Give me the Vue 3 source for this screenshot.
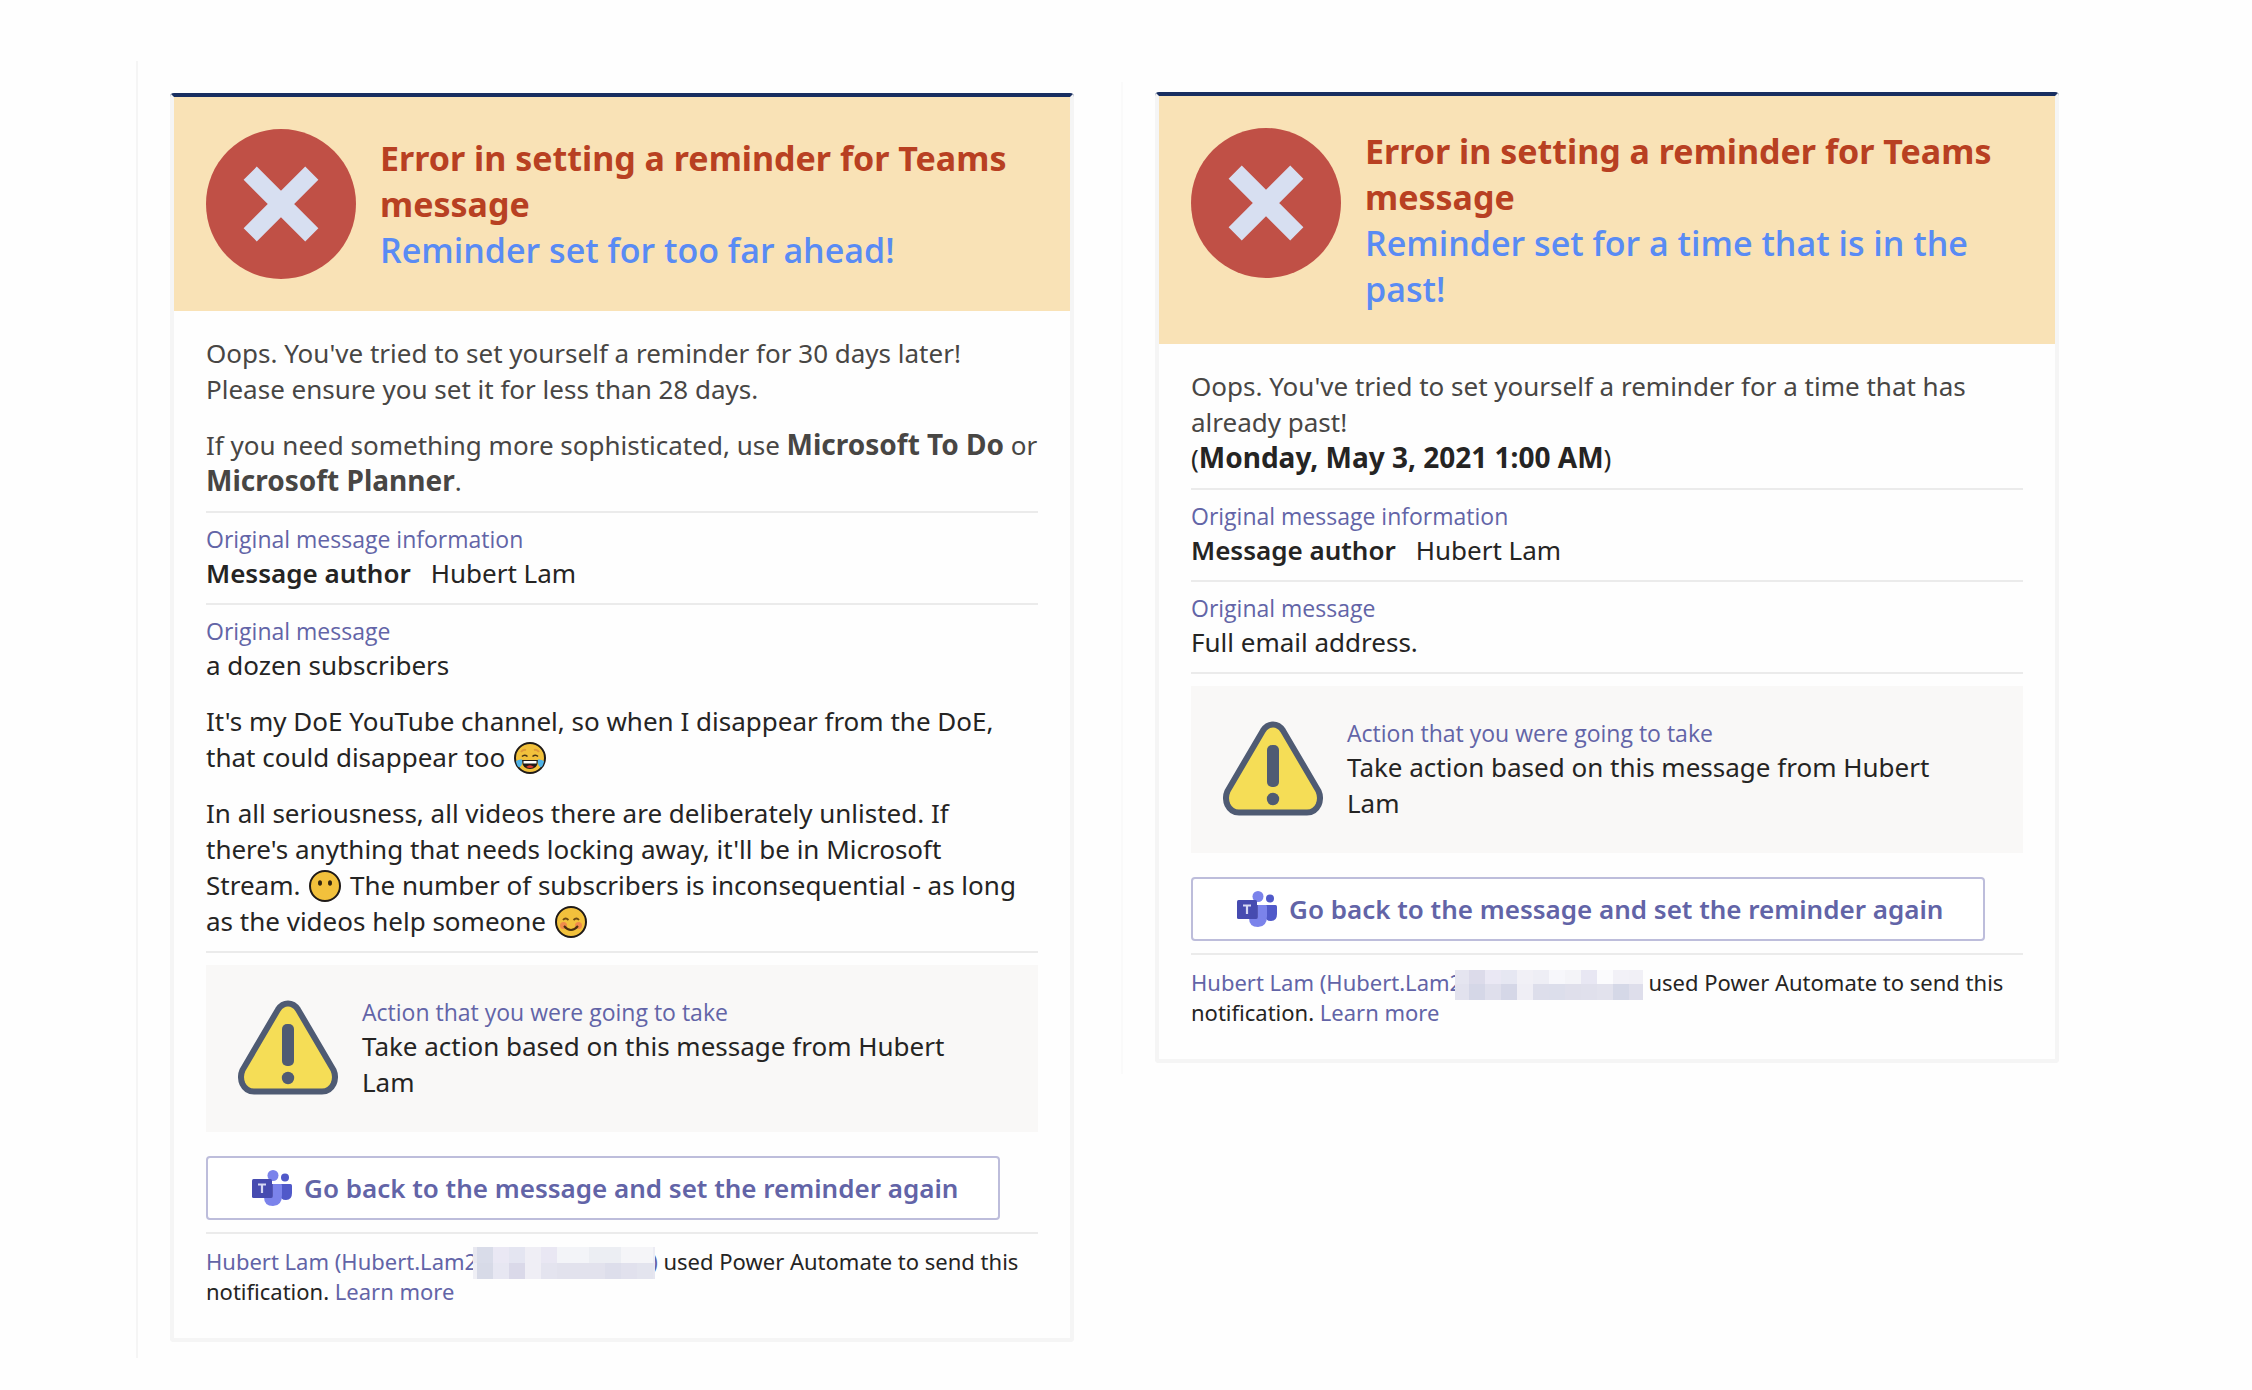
<script setup>
const cards = [
  {
    id: 'future',
    subtitle: 'Reminder set for too far ahead!',
    late: false,
    shades: {
      widths: [4, 16, 16, 16, 16, 16, 16, 16, 16, 16, 16, 16, 2],
      heights: [16, 16],
      rows: [
        ['#e8e8f0', '#d9dce9', '#eae8f4', '#e4e5f1', '#efeef5', '#e9e7f3', '#f3f4f8', '#f3f4f8', '#eceef3', '#eceef3', '#f5f5f8', '#f5f5f8', '#ececf4'],
        ['#efeff5', '#d7dae7', '#e7e7f2', '#dad9e9', '#efeef5', '#e4e4ef', '#e2e2ed', '#e2e2ed', '#e2e2ed', '#dddeeb', '#e1e1ed', '#e3e4ee', '#e6e6f0']
      ]
    }
  },
  {
    id: 'past',
    subtitle: 'Reminder set for a time that is in the past!',
    late: true,
    shades: {
      widths: [14, 16, 16, 16, 16, 16, 16, 16, 16, 16, 16, 14],
      heights: [14, 16],
      rows: [
        ['#e5e5f0', '#dcdbea', '#eae8f4', '#e6e7f2', '#f1f0f6', '#eeeef5', '#f7f7fb', '#f4f4f8', '#e8e7f3', '#fbfbfd', '#f2f1f7', '#f1f0f6'],
        ['#e2e2ee', '#d5d7e7', '#dfdfec', '#d5d7e7', '#efeef5', '#dddeeb', '#dcdeeb', '#dfdfeb', '#e0e0ec', '#e2e2ed', '#d5d8e7', '#dedeeb']
      ]
    }
  }
]

const sum = (list) => list.reduce((a, b) => a + b, 0)

function tiles({ widths, heights, rows }) {
  return rows.flatMap((row, r) =>
    row.map((fill, c) => ({
      fill,
      x: sum(widths.slice(0, c)),
      y: sum(heights.slice(0, r)),
      width: widths[c],
      height: heights[r]
    }))
  )
}
</script>

<template>
  <main class="page">
    <section v-for="card in cards" :key="card.id" class="thread" :class="card.id">
      <article class="card">
        <header class="banner">
          <svg class="error-icon" viewBox="0 0 150 150" aria-hidden="true">
            <circle cx="75" cy="75" r="75" fill="#c05046" />
            <path d="M44.2 44.2L105.8 105.8M105.8 44.2L44.2 105.8" stroke="#d7dff1" stroke-width="18.6" />
          </svg>
          <div class="banner-text">
            <h1>Error in setting a reminder for Teams message</h1>
            <h2>{{ card.subtitle }}</h2>
          </div>
        </header>

        <div class="body">
          <div v-if="card.late" class="intro">
            <p>
              Oops. You've tried to set yourself a reminder for a time that has<br />already past!<br />
              <span class="dark">(<strong>Monday, May 3, 2021 1:00 AM</strong>)</span>
            </p>
          </div>
          <div v-else class="intro">
            <p>
              Oops. You've tried to set yourself a reminder for 30 days later!<br />Please ensure you set it for
              less than 28 days.
            </p>
            <p>
              If you need something more sophisticated, use <strong>Microsoft To Do</strong> or
              <strong>Microsoft Planner</strong>.
            </p>
          </div>

          <section class="block">
            <h3>Original message information</h3>
            <dl class="fact">
              <dt>Message author</dt>
              <dd>Hubert Lam</dd>
            </dl>
          </section>

          <section class="block">
            <h3>Original message</h3>
            <p v-if="card.late">Full email address.</p>
            <template v-else>
              <p>a dozen subscribers</p>
              <p>
                It's my DoE YouTube channel, so when I disappear from the DoE,<br />that could disappear too
                <svg class="emoji" viewBox="0 0 32 32" role="img" aria-label="face with tears of joy">
                  <circle cx="16" cy="16" r="15" fill="#f2c13c" stroke="#1f1a17" stroke-width="2" />
                  <path d="M7 10Q9 7 12 8M20 8Q23 7 25 10" fill="none" stroke="#e09a3a" stroke-width="2" />
                  <path d="M8 14.500Q10.500 12 13.500 14.500M18.500 14.500Q21.500 12 24 14.500" fill="none" stroke="#4a3516" stroke-width="1.600" />
                  <path d="M8 18H24Q24 27 16 27Q8 27 8 18Z" fill="#1f1a17" />
                  <path d="M9.500 19H22.500V21.500H9.500Z" fill="#fff" />
                  <path d="M12 25Q16 21.500 20 25Q16 27 12 25Z" fill="#e03a2f" />
                  <path d="M2 19Q5 17 8 17.500Q9 23 6 25Q3 26 2 19ZM30 19Q27 17 24 17.500Q23 23 26 25Q29 26 30 19Z" fill="#4fb3e8" />
                </svg>
              </p>
              <p>
                In all seriousness, all videos there are deliberately unlisted. If<br />there's anything that needs
                locking away, it'll be in Microsoft<br />Stream.
                <svg class="emoji" viewBox="0 0 32 32" role="img" aria-label="face without mouth">
                  <circle cx="16" cy="16" r="15" fill="#f2c13c" stroke="#1f1a17" stroke-width="2" />
                  <ellipse cx="11" cy="13" rx="2" ry="2.800" fill="#33260f" />
                  <ellipse cx="21" cy="13" rx="2" ry="2.800" fill="#33260f" />
                </svg>
                The number of subscribers is inconsequential - as long<br />as the videos help someone
                <svg class="emoji" viewBox="0 0 32 32" role="img" aria-label="smiling face with smiling eyes">
                  <circle cx="16" cy="16" r="15" fill="#f2c13c" stroke="#1f1a17" stroke-width="2" />
                  <circle cx="8.500" cy="19.500" r="3.500" fill="#f08a4b" />
                  <circle cx="23.500" cy="19.500" r="3.500" fill="#f08a4b" />
                  <path d="M8 14Q10.500 11 13.500 14M18.500 14Q21.500 11 24 14" fill="none" stroke="#6b4a14" stroke-width="1.800" />
                  <path d="M9 20Q16 28 23 20" fill="none" stroke="#4a2f10" stroke-width="2" />
                </svg>
              </p>
            </template>
          </section>

          <section class="block flush">
            <div class="action">
              <svg class="warning-icon" viewBox="0 -2 100 100" aria-hidden="true">
                <path
                  d="M40 11.500Q44 5.500 50 5.500Q56 5.500 60 11.500L95.500 72Q98.500 79 95.500 86Q92 93.500 84 93.500H16Q8 93.500 4.500 86Q1.500 79 4.500 72Z"
                  fill="#f5dd56"
                  stroke="#4f5b73"
                  stroke-width="6"
                />
                <rect x="44" y="26" width="12" height="42" rx="5" fill="#4f5b73" />
                <circle cx="50" cy="80" r="6.200" fill="#4f5b73" />
              </svg>
              <div class="action-text">
                <h3>Action that you were going to take</h3>
                <p>Take action based on this message from Hubert Lam</p>
              </div>
            </div>
            <button type="button" class="go-back">
              <svg class="teams-icon" viewBox="0 0 40 36" aria-hidden="true">
                <circle cx="33" cy="7.500" r="4" fill="#5059c9" />
                <path d="M28 14H38.500Q40 14 40 15.500V23Q40 30 34 30Q28 30 28 24Z" fill="#5059c9" />
                <circle cx="21" cy="5.500" r="5.500" fill="#7b83eb" />
                <path d="M12 14H29Q30 14 30 15.500V25Q30 36 21 36Q12 36 12 27Z" fill="#7b83eb" />
                <path d="M12 14H21V26Q21 28 19 28H12.500Z" fill="#5558b5" />
                <rect x="0" y="9" width="20" height="19" rx="1.500" fill="#464bb0" />
                <path d="M6 14.500H14M10 14.500V23" stroke="#d5d7f2" stroke-width="2.200" />
              </svg>
              <span>Go back to the message and set the reminder again</span>
            </button>
          </section>

          <footer class="block small">
            <a href="#"
              >Hubert Lam (Hubert.Lam2<svg
                class="redacted"
                :width="sum(card.shades.widths)"
                :height="sum(card.shades.heights)"
                shape-rendering="crispEdges"
                aria-hidden="true"
              >
                <rect
                  v-for="(tile, i) in tiles(card.shades)"
                  :key="i"
                  :x="tile.x"
                  :y="tile.y"
                  :width="tile.width"
                  :height="tile.height"
                  :fill="tile.fill"
                /></svg
              >)</a
            >
            used Power Automate to send this<br />notification. <a href="#">Learn more</a>
          </footer>
        </div>
      </article>
    </section>
  </main>
</template>

<style>
body {
  margin: 0;
  background: #fefefe;
}
</style>

<style scoped>
.page {
  display: grid;
  grid-template-columns: 1fr 1fr;
  align-items: start;
  column-gap: 47px;
  padding: 61px 193px 32px 136px;
  font-family: "Noto Sans", "Open Sans", sans-serif;
  font-size: 26px;
  line-height: 36px;
  color: #252423;
}

h1, h2, h3, p, dl, dd {
  margin: 0;
}

a {
  color: #6264a7;
  text-decoration: none;
}

strong {
  font-size: 28px;
  line-height: 28px;
}

.thread {
  border-left: 2px solid #f5f5f5;
  padding: 32px 0 16px 32px;
}

.thread.past {
  margin-top: 21px;
  padding: 10px 0 11px 32px;
  border-left-color: #fafafa;
}

.card {
  border: 4px solid #f5f5f5;
  border-top-color: #182e60;
  border-radius: 4px;
  background: #fefefe;
}

.banner {
  display: flex;
  align-items: center;
  gap: 24px;
  padding: 32px;
  background: #f9e2b6;
}

.error-icon {
  flex: none;
  align-self: flex-start;
  width: 150px;
  height: 150px;
}

h2, h3 {
  font-family: "Open Sans", "Noto Sans", sans-serif;
}

h1, h2 {
  font-size: 34px;
  line-height: 46px;
}

h1 {
  font-weight: 700;
  color: #b84022;
}

h2 {
  font-weight: 600;
  color: #598bf4;
}

.body {
  padding: 24px 32px 32px;
}

.intro {
  color: #484644;
}

.dark {
  color: #252423;
}

p + p {
  margin-top: 20px;
}

.block {
  margin-top: 12px;
  padding-top: 10px;
  border-top: 2px solid #ebebeb;
}

.block.flush {
  padding-top: 12px;
}

h3 {
  font-size: 23px;
  font-weight: 400;
  line-height: 32px;
  color: #6264a7;
}

.fact {
  display: flex;
  gap: 20px;
}

.fact dt {
  font-weight: 600;
}

.emoji {
  width: 32px;
  height: 32px;
  margin: -4px 2px;
  vertical-align: -3px;
}

.action {
  display: flex;
  align-items: flex-start;
  gap: 24px;
  padding: 31px 48px 32px 32px;
  background: #f9f8f7;
}

.warning-icon {
  flex: none;
  width: 100px;
  height: 100px;
}

.go-back {
  display: flex;
  align-items: center;
  gap: 12px;
  height: 64px;
  margin-top: 24px;
  padding: 0 40px 0 44px;
  border: 2px solid #bdbddb;
  border-radius: 4px;
  background: #fff;
  color: #6264a7;
  font: inherit;
  font-weight: 600;
}

.teams-icon {
  width: 40px;
  height: 36px;
}

.small {
  padding-top: 12px;
  font-size: 22px;
  line-height: 30px;
}

/* The blurred address overlaps the characters on either side of it. */
.redacted {
  position: relative;
  margin: -4px;
  vertical-align: -5px;
}

.past .redacted {
  margin: -4px -7px;
}
</style>
